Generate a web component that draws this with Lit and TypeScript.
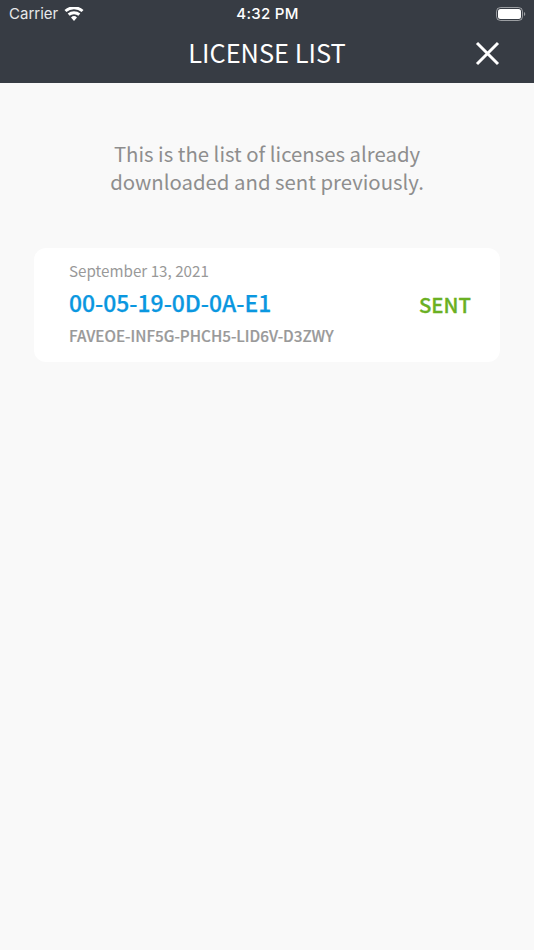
import { LitElement, html, css } from "lit";
import { customElement } from "lit/decorators.js";

@customElement("app-root")
export class AppRoot extends LitElement {
  static styles = css`
    :host { display: block; width: 534px; height: 950px; background: #f9f9f9; font-family: "Noto Sans CJK JP", "Open Sans", sans-serif; overflow: hidden; }
    .top { background: #373c44; height: 83px; display: flex; flex-direction: column; color: #fff; position: relative; }
    .status { height: 27px; display: grid; grid-template-columns: 1fr auto 1fr; align-items: center; padding: 0 8px 0 9px; font-family: "Inter", sans-serif; font-size: 15px; }
    .left { display: flex; align-items: center; gap: 6px; color: #e8e9ea; }
    .time { font-weight: 500; letter-spacing: .3px; }
    .right { display: flex; justify-content: flex-end; }
    .nav { flex: 1; display: flex; align-items: center; justify-content: center; font-size: 25.4px; line-height: 34px; padding-bottom: 6px; }
    .close { position: absolute; left: 475px; top: 41px; }
    .intro { margin: 56px 0 0; text-align: center; color: #8e8e8e; font-size: 20.35px; line-height: 28px; }
    .card { margin: 53px 34px 0; height: 114px; box-sizing: border-box; background: #fff; border-radius: 12px; padding: 0 29px 0 35px; display: flex; align-items: center; }
    .info { flex: 1; align-self: flex-start; padding-top: 11px; }
    .date { color: #999; font-size: 15.2px; line-height: 22px; }
    .mac { color: #0a97e0; font-size: 22.9px; font-weight: 500; -webkit-text-stroke: .25px #0a97e0; line-height: 32px; margin-top: 5px; }
    .key { color: #999; font-size: 15.25px; font-weight: 500; -webkit-text-stroke: .2px #999; line-height: 22px; margin-top: 6px; }
    .sent { color: #6ab023; font-size: 20.4px; font-weight: 500; -webkit-text-stroke: .3px #6ab023; line-height: 30px; margin-top: -2px; }
  `;
  render() {
    return html`
      <div class="top">
        <div class="status">
          <div class="left">Carrier
            <svg width="20" height="14" viewBox="0 0 20 14"><path fill="#fff" d="M10 14l-3-3.6a4.6 4.6 0 0 1 6 0zM5.6 8.8 3.7 6.6a9.6 9.6 0 0 1 12.6 0l-1.9 2.2a6.7 6.7 0 0 0-8.8 0zM2.4 5 .5 2.9a14.4 14.4 0 0 1 19 0L17.6 5a11.6 11.6 0 0 0-15.2 0z"/></svg>
          </div>
          <div class="time">4:32 PM</div>
          <div class="right">
            <svg width="30" height="14" viewBox="0 0 30 14"><rect x=".5" y=".5" width="26" height="13" rx="4" fill="none" stroke="#fff" opacity=".5"/><rect x="2" y="2" width="23" height="10" rx="2.5" fill="#fff"/><path d="M28 5v4a2.2 2.2 0 0 0 0-4z" fill="#fff" opacity=".5"/></svg>
          </div>
        </div>
        <div class="nav">LICENSE LIST</div>
        <svg class="close" width="25" height="25" viewBox="0 0 25 25"><path d="M2 2l21 21M23 2L2 23" stroke="#fff" stroke-width="3" fill="none"/></svg>
      </div>
      <p class="intro">This is the list of licenses already<br/>downloaded and sent previously.</p>
      <div class="card">
        <div class="info">
          <div class="date">September 13, 2021</div>
          <div class="mac">00-05-19-0D-0A-E1</div>
          <div class="key">FAVEOE-INF5G-PHCH5-LID6V-D3ZWY</div>
        </div>
        <div class="sent">SENT</div>
      </div>
    `;
  }
}
